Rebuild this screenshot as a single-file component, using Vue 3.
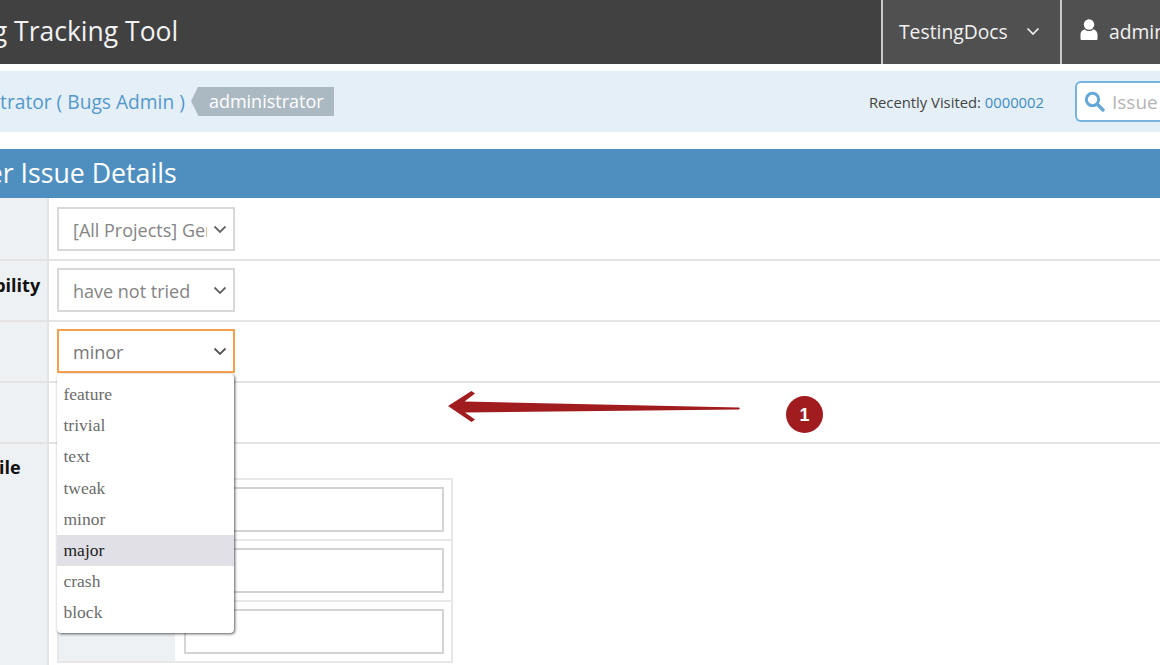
<script setup>
const rows = [
  { label: 'Category', value: '[All Projects] General', state: 'clip' },
  { label: 'Reproducibility', value: 'have not tried', state: '' },
  { label: 'Severity', value: 'minor', state: 'focus' },
]
const options = ['feature', 'trivial', 'text', 'tweak', 'minor', 'major', 'crash', 'block']
</script>

<template>
  <div class="page">
    <header class="nav">
      <div class="brand">Mantis Bug Tracking Tool</div>
      <div class="nav-item project">
        <span>TestingDocs</span>
        <svg class="caret" width="14" height="9" viewBox="0 0 14 9"><path d="M1.500 1.500 7 7l5.500-5.500" fill="none" stroke="#eee" stroke-width="1.700" /></svg>
      </div>
      <div class="nav-item user">
        <svg width="18" height="21" viewBox="0 0 18 21"><circle cx="9" cy="5.500" r="5.200" fill="#fff" /><path d="M0.500 20v-4.500C.5 12.500 3 10.500 5 10.500c1 1 2.500 1.500 4 1.500s3-.5 4-1.500c2 0 4.500 2 4.500 5V20a1 1 0 0 1-1 1H1.500a1 1 0 0 1-1-1z" fill="#fff" /></svg>
        <span>administrator</span>
      </div>
    </header>

    <div class="crumbs">
      <div class="who">
        <a class="link">Logged In As: administrator ( Bugs Admin )</a>
        <span class="tag">administrator</span>
      </div>
      <div class="recent">Recently Visited: <a class="num">0000002</a></div>
      <div class="search">
        <svg width="21" height="21" viewBox="0 0 21 21"><circle cx="8.500" cy="8.500" r="6.200" fill="none" stroke="#62a8d8" stroke-width="3" /><path d="m13.500 13.500 5.500 5.500" stroke="#62a8d8" stroke-width="3.400" stroke-linecap="round" /></svg>
        <span>Issue #</span>
      </div>
    </div>

    <h2 class="title">Enter Issue Details</h2>

    <section class="form">
      <div v-for="r in rows" :key="r.label" class="row">
        <div class="label"><b>{{ r.label }}</b></div>
        <div class="cell">
          <div class="select" :class="r.state">
            <span class="select-text">{{ r.value }}</span>
            <svg width="14" height="9" viewBox="0 0 14 9"><path d="M1.500 1.500 7 7l5.500-5.500" fill="none" stroke="#666" stroke-width="1.800" /></svg>
          </div>
        </div>
      </div>
      <div class="row">
        <div class="label"><b>Priority</b></div>
        <div class="cell"></div>
      </div>
      <div class="row last">
        <div class="label"><b>Select Profile</b></div>
        <div class="cell">
          <div class="profile">
            <div v-for="n in 3" :key="n" class="profile-row">
              <div class="profile-label"></div>
              <div class="profile-cell"><div class="input"></div></div>
            </div>
          </div>
        </div>
      </div>

      <ul class="menu">
        <li v-for="o in options" :key="o" :class="{ hover: o === 'major' }">{{ o }}</li>
      </ul>

      <svg class="arrow" width="295" height="34" viewBox="0 0 295 34">
        <path d="M1 16 24.500 1 28 3.500 17.500 11.500 292 17.500q1.500 1 0 2L18 22.500 28 29.500 24.500 32z" fill="#a01c1f" />
      </svg>
      <div class="badge">1</div>
    </section>
  </div>
</template>

<style scoped>
.page {
  width: 1160px;
  height: 665px;
  overflow: hidden;
  background: #fff;
  font-family: "Open Sans", "Noto Sans", sans-serif;
  color: #444;
}
.nav {
  display: flex;
  height: 64px;
  background: #414141;
  color: #f2f2f2;
}
.brand {
  flex: 1;
  margin-left: -131px;
  font-size: 26.500px;
  line-height: 62px;
  white-space: nowrap;
}
.nav-item {
  display: flex;
  align-items: center;
  height: 64px;
  padding-bottom: 2px;
  font-size: 19.300px;
  background: #505050;
  border-left: 2px solid #c9c9c9;
  white-space: nowrap;
  box-sizing: border-box;
}
.project {
  width: 179px;
  flex: none;
  padding-left: 16px;
  gap: 18px;
}
.user {
  width: 100px;
  flex: none;
  padding-left: 18px;
  gap: 11px;
  overflow: hidden;
}
.user svg { margin-top: -4px; flex: none; }
.crumbs {
  display: flex;
  align-items: center;
  height: 61px;
  margin-top: 7px;
  background: #e4eff7;
}
.who {
  flex: 1;
  display: flex;
  align-items: center;
  margin-left: -194px;
  white-space: nowrap;
}
.link {
  color: #5499cb;
  font-size: 19.200px;
}
.tag {
  position: relative;
  margin-left: 13px;
  padding: 0 10px 0 11px;
  height: 29px;
  line-height: 29px;
  font-size: 18px;
  color: #fff;
  background: #abb9c2;
}
.tag::before {
  content: "";
  position: absolute;
  left: -7px;
  top: 0;
  border-style: solid;
  border-width: 14.500px 7px 14.500px 0;
  border-color: transparent #abb9c2 transparent transparent;
}
.recent {
  font-size: 14.800px;
  color: #444;
  margin-right: 31px;
  white-space: nowrap;
}
.num { color: #3f8cc4; }
.search {
  display: flex;
  align-items: center;
  gap: 7px;
  flex: none;
  box-sizing: border-box;
  width: 85px;
  height: 41px;
  padding-left: 7px;
  border: 2px solid #74b4df;
  border-right: 0;
  border-radius: 6px 0 0 6px;
  background: #fff;
  color: #b5b5b5;
  font-size: 19px;
  white-space: nowrap;
  overflow: hidden;
}
.search svg { flex: none; }
.title {
  margin: 17px 0 0;
  height: 49px;
  line-height: 48px;
  text-indent: -53px;
  font-size: 26.700px;
  font-weight: 400;
  color: #fff;
  background: #4f8fc0;
  white-space: nowrap;
  box-sizing: border-box;
}
.form {
  position: relative;
  padding-top: 2px;
  background: linear-gradient(to right, #edf1f4 47px, #e3e3e3 47px, #e3e3e3 49px, #fff 49px);
}
.row {
  display: flex;
  height: 61px;
  box-sizing: border-box;
  border-bottom: 2px solid #e3e3e3;
  background: #fff;
}
.row.last {
  height: 240px;
  border-bottom: 0;
}
.row.last .label {
  padding-top: 11px;
}
.label {
  flex: none;
  width: 47px;
  overflow: hidden;
  background: #edf1f4;
  border-right: 2px solid #e3e3e3;
  white-space: nowrap;
  color: #111;
  font-size: 18px;
  line-height: 25px;
  padding-top: 12px;
}
.label b {
  display: block;
  margin-left: -97px;
  width: 200px;
}
.cell {
  flex: 1;
  padding: 7px 0 0 8px;
}
.select {
  display: flex;
  align-items: center;
  justify-content: space-between;
  box-sizing: border-box;
  width: 178px;
  height: 44px;
  padding: 2px 6px 0 14px;
  border: 2px solid #d8d8d8;
  color: #858585;
  font-size: 18px;
  background: #fff;
}
.select.focus {
  border-color: #f4a04e;
  color: #777;
}
.select-text {
  display: block;
  width: 134px;
  overflow: hidden;
  white-space: nowrap;
}
.select svg { margin-top: -2px; }
.select.focus svg path { stroke: #555; }
.profile {
  margin-top: 27px;
  width: 396px;
  border: 2px solid #e8e8e8;
  box-sizing: border-box;
}
.profile-row {
  display: flex;
  height: 61px;
  border-bottom: 2px solid #e8e8e8;
  box-sizing: border-box;
}
.profile-row:last-child {
  height: 59px;
  border-bottom: 0;
}
.profile-label {
  flex: none;
  width: 116px;
  background: #edf1f4;
}
.profile-cell {
  flex: 1;
  padding: 7px 7px 0 9px;
}
.input {
  box-sizing: border-box;
  height: 45px;
  border: 2px solid #d4d4d4;
  background: #fff;
}
.menu {
  position: absolute;
  left: 57px;
  top: 176px;
  width: 177px;
  margin: 0;
  padding: 5px 0 4px;
  box-sizing: border-box;
  height: 259px;
  list-style: none;
  background: #fff;
  border-radius: 4px;
  box-shadow: 1px 1px 3px rgba(0, 0, 0, 0.65);
  font-family: "Liberation Serif", serif;
  font-size: 17.500px;
  color: #6b6b6b;
}
.menu li {
  height: 31.200px;
  line-height: 31.200px;
  padding-left: 6.500px;
}
.menu li.hover {
  background: #e0e0e6;
  color: #222;
}
.arrow {
  position: absolute;
  left: 447px;
  top: 192px;
}
.badge {
  position: absolute;
  left: 786px;
  top: 198px;
  width: 37px;
  height: 37px;
  line-height: 38px;
  border-radius: 50%;
  background: #a01c1f;
  color: #fff;
  text-align: center;
  font-family: "Liberation Sans", sans-serif;
  font-weight: 700;
  font-size: 18px;
}
</style>
